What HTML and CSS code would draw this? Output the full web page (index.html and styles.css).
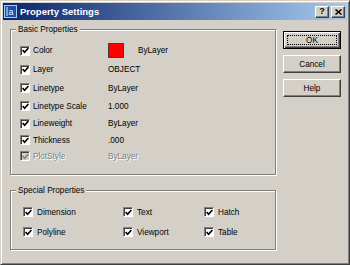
FILE: index.html
```html
<!DOCTYPE html>
<html>
<head>
<meta charset="utf-8">
<title>Property Settings</title>
<link rel="stylesheet" href="styles.css">
</head>
<body>
<div class="window">
  <div class="titlebar">
    <svg class="app-icon" width="13" height="13" viewBox="0 0 13 13">
      <rect x="0.5" y="0.5" width="12" height="12" fill="#1c4fa8" stroke="#9fd0f0"/>
      <line x1="3" y1="2" x2="3" y2="11" stroke="#e8f4ff" stroke-width="1"/>
      <text x="4.5" y="10" font-family="Liberation Sans, sans-serif" font-size="9" fill="#e8f4ff">a</text>
    </svg>
    <span class="title">Property Settings</span>
    <div class="tb-btns">
      <span class="tb-btn">?</span>
      <span class="tb-btn"><svg width="7" height="6" viewBox="0 0 7 6"><path d="M0.5 0.5 L6.5 5.5 M6.5 0.5 L0.5 5.5" stroke="#000" stroke-width="1.5"/></svg></span>
    </div>
  </div>
  <div class="main">
    <div class="groups">
      <div class="group basic">
        <span class="legend">Basic Properties</span>
        <div class="props">
          <div class="prop"><span class="cb"><svg width="7" height="7" viewBox="0 0 7 7"><path d="M0.6 3 L2.6 5.2 L6.4 1" fill="none" stroke="#000" stroke-width="1.6"/></svg></span><span>Color</span><span class="color-val"><span class="swatch"></span><span>ByLayer</span></span></div>
          <div class="prop"><span class="cb"><svg width="7" height="7" viewBox="0 0 7 7"><path d="M0.6 3 L2.6 5.2 L6.4 1" fill="none" stroke="#000" stroke-width="1.6"/></svg></span><span>Layer</span><span>OBJECT</span></div>
          <div class="prop"><span class="cb"><svg width="7" height="7" viewBox="0 0 7 7"><path d="M0.6 3 L2.6 5.2 L6.4 1" fill="none" stroke="#000" stroke-width="1.6"/></svg></span><span>Linetype</span><span>ByLayer</span></div>
          <div class="prop"><span class="cb"><svg width="7" height="7" viewBox="0 0 7 7"><path d="M0.6 3 L2.6 5.2 L6.4 1" fill="none" stroke="#000" stroke-width="1.6"/></svg></span><span>Linetype Scale</span><span>1.000</span></div>
          <div class="prop"><span class="cb"><svg width="7" height="7" viewBox="0 0 7 7"><path d="M0.6 3 L2.6 5.2 L6.4 1" fill="none" stroke="#000" stroke-width="1.6"/></svg></span><span>Lineweight</span><span>ByLayer</span></div>
          <div class="prop"><span class="cb"><svg width="7" height="7" viewBox="0 0 7 7"><path d="M0.6 3 L2.6 5.2 L6.4 1" fill="none" stroke="#000" stroke-width="1.6"/></svg></span><span>Thickness</span><span>.000</span></div>
          <div class="prop disabled"><span class="cb"><svg width="7" height="7" viewBox="0 0 7 7"><path d="M0.6 3 L2.6 5.2 L6.4 1" fill="none" stroke="#808080" stroke-width="1.6"/></svg></span><span>PlotStyle</span><span>ByLayer</span></div>
        </div>
      </div>
      <div class="group special">
        <span class="legend">Special Properties</span>
        <div class="specials">
          <div class="sp"><span class="cb"><svg width="7" height="7" viewBox="0 0 7 7"><path d="M0.6 3 L2.6 5.2 L6.4 1" fill="none" stroke="#000" stroke-width="1.6"/></svg></span><span>Dimension</span></div>
          <div class="sp"><span class="cb"><svg width="7" height="7" viewBox="0 0 7 7"><path d="M0.6 3 L2.6 5.2 L6.4 1" fill="none" stroke="#000" stroke-width="1.6"/></svg></span><span>Text</span></div>
          <div class="sp"><span class="cb"><svg width="7" height="7" viewBox="0 0 7 7"><path d="M0.6 3 L2.6 5.2 L6.4 1" fill="none" stroke="#000" stroke-width="1.6"/></svg></span><span>Hatch</span></div>
          <div class="sp"><span class="cb"><svg width="7" height="7" viewBox="0 0 7 7"><path d="M0.6 3 L2.6 5.2 L6.4 1" fill="none" stroke="#000" stroke-width="1.6"/></svg></span><span>Polyline</span></div>
          <div class="sp"><span class="cb"><svg width="7" height="7" viewBox="0 0 7 7"><path d="M0.6 3 L2.6 5.2 L6.4 1" fill="none" stroke="#000" stroke-width="1.6"/></svg></span><span>Viewport</span></div>
          <div class="sp"><span class="cb"><svg width="7" height="7" viewBox="0 0 7 7"><path d="M0.6 3 L2.6 5.2 L6.4 1" fill="none" stroke="#000" stroke-width="1.6"/></svg></span><span>Table</span></div>
        </div>
      </div>
    </div>
    <div class="buttons">
      <div class="btn default"><span class="focus">OK</span></div>
      <div class="btn">Cancel</div>
      <div class="btn">Help</div>
    </div>
  </div>
</div>
</body>
</html>
```
FILE: styles.css
```css
html, body {
  margin: 0;
  padding: 0;
}
body {
  width: 350px;
  height: 265px;
  background: #d4d0c8;
  font-family: "Liberation Sans", Arial, sans-serif;
  font-size: 8.2px;
  color: #000;
  overflow: hidden;
}
.window {
  box-sizing: border-box;
  width: 350px;
  height: 265px;
  border: 1px solid;
  border-color: #d4d0c8 #404040 #404040 #d4d0c8;
  box-shadow: inset 1px 1px #fff, inset -1px -1px #808080;
  padding: 2px;
  display: flex;
  flex-direction: column;
}
.titlebar {
  height: 17px;
  flex: none;
  background: linear-gradient(to right, #0a246a, #a6caf0);
  display: flex;
  align-items: center;
  padding: 0 2px 0 1px;
  gap: 3px;
}
.app-icon {
  flex: none;
  display: block;
}
.title {
  color: #fff;
  font-weight: bold;
  font-size: 9.5px;
  flex: 1;
}
.tb-btns {
  display: flex;
  gap: 2px;
}
.tb-btn {
  width: 14px;
  height: 12px;
  box-sizing: border-box;
  background: #d4d0c8;
  border: 1px solid;
  border-color: #fff #404040 #404040 #fff;
  box-shadow: inset -1px -1px #808080;
  display: flex;
  align-items: center;
  justify-content: center;
  font-weight: bold;
  font-size: 9px;
  line-height: 1;
}
.tb-btn svg { display: block; }
.main {
  display: flex;
  padding: 9px 0 0 7px;
  gap: 7px;
}
.groups {
  width: 266px;
  display: flex;
  flex-direction: column;
  gap: 15px;
}
.group {
  position: relative;
  box-sizing: border-box;
  border: 1px solid #808080;
  box-shadow: inset 1px 1px #fff, 1px 1px #fff;
}
.group.basic {
  height: 146px;
  padding: 11px 0 0 9px;
}
.group.special {
  height: 60px;
  padding: 11px 0 0 12px;
}
.legend {
  position: absolute;
  top: -6px;
  left: 5px;
  padding: 0 2px;
  background: #d4d0c8;
  line-height: 11px;
}
.props {
  display: grid;
  grid-template-rows: 19px 19px 18px 18px 17px 16px 16px;
}
.prop {
  display: grid;
  grid-template-columns: 13px 75px 1fr;
  align-items: center;
}
.prop.disabled {
  color: #808080;
  text-shadow: 1px 1px #fff;
}
.cb {
  width: 10px;
  height: 10px;
  box-sizing: border-box;
  background: #fff;
  border: 1px solid;
  border-color: #808080 #fff #fff #808080;
  box-shadow: inset 1px 1px #404040;
  display: flex;
  align-items: center;
  justify-content: center;
}
.cb svg { display: block; }
.disabled .cb {
  background: #d4d0c8;
}
.color-val {
  display: flex;
  align-items: center;
  gap: 14px;
}
.swatch {
  width: 16px;
  height: 15px;
  box-sizing: border-box;
  background: #ff0000;
  border: 1px solid #404040;
}
.specials {
  display: grid;
  grid-template-columns: 100px 81px 1fr;
  grid-template-rows: 20px 20px;
}
.sp {
  display: flex;
  align-items: center;
  gap: 4px;
}
.buttons {
  display: flex;
  flex-direction: column;
  gap: 6px;
  padding-top: 2px;
}
.btn {
  width: 58px;
  height: 18px;
  box-sizing: border-box;
  border: 1px solid;
  border-color: #fff #404040 #404040 #fff;
  box-shadow: inset -1px -1px #808080;
  display: flex;
  align-items: center;
  justify-content: center;
}
.btn.default {
  border-color: #000;
  box-shadow: inset 1px 1px #fff, inset -1px -1px #404040, inset -2px -2px #808080;
  padding: 3px;
  align-items: stretch;
}
.focus {
  flex: 1;
  border: 1px dotted #000;
  display: flex;
  align-items: center;
  justify-content: center;
}
```
